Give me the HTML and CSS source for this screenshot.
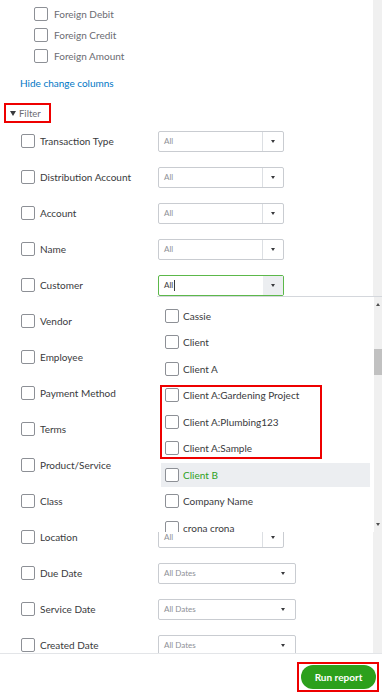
FILE: index.html
```html
<!DOCTYPE html>
<html lang="en">
<head>
    <meta charset="UTF-8">
    <meta name="viewport" content="width=device-width, initial-scale=1.0">
    <title>Report Filters</title>
    <link rel="stylesheet" href="styles.css">
</head>
<body>

<div class="scroller">
    <div class="content">
        <ul class="columns">
            <li><span class="box"></span>Foreign Balance</li>
            <li><span class="box"></span>Foreign Debit</li>
            <li><span class="box"></span>Foreign Credit</li>
            <li><span class="box"></span>Foreign Amount</li>
        </ul>

        <a class="change-link" href="#">Hide change columns</a>

        <div class="filter-head"><span class="caret"></span>Filter</div>

        <div class="filters">
            <div class="filter-row"><span class="box"></span><span class="label">Transaction Type</span>
                <div class="select"><span class="value">All</span><span class="arrow"></span></div></div>
            <div class="filter-row"><span class="box"></span><span class="label">Distribution Account</span>
                <div class="select"><span class="value">All</span><span class="arrow"></span></div></div>
            <div class="filter-row"><span class="box"></span><span class="label">Account</span>
                <div class="select"><span class="value">All</span><span class="arrow"></span></div></div>
            <div class="filter-row"><span class="box"></span><span class="label">Name</span>
                <div class="select"><span class="value">All</span><span class="arrow"></span></div></div>
            <div class="filter-row"><span class="box"></span><span class="label">Customer</span>
                <div class="select focused"><span class="value">All<span class="cursor"></span></span><span class="arrow"></span>
                    <div class="dropdown">
                        <ul class="options">
                            <li><span class="box"></span>Cassie</li>
                            <li><span class="box"></span>Client</li>
                            <li><span class="box"></span>Client A</li>
                            <li><span class="box"></span>Client A:Gardening Project</li>
                            <li><span class="box"></span>Client A:Plumbing123</li>
                            <li><span class="box"></span>Client A:Sample</li>
                            <li class="hover"><span class="box"></span>Client B</li>
                            <li><span class="box"></span>Company Name</li>
                            <li><span class="box"></span>crona crona</li>
                        </ul>
                        <div class="mark"></div>
                        <div class="dd-scroll">
                            <span class="up"></span>
                            <span class="thumb"></span>
                            <span class="down"></span>
                        </div>
                    </div>
                </div></div>
            <div class="filter-row"><span class="box"></span><span class="label">Vendor</span>
                <div class="select"><span class="value">All</span><span class="arrow"></span></div></div>
            <div class="filter-row"><span class="box"></span><span class="label">Employee</span>
                <div class="select"><span class="value">All</span><span class="arrow"></span></div></div>
            <div class="filter-row"><span class="box"></span><span class="label">Payment Method</span>
                <div class="select"><span class="value">All</span><span class="arrow"></span></div></div>
            <div class="filter-row"><span class="box"></span><span class="label">Terms</span>
                <div class="select"><span class="value">All</span><span class="arrow"></span></div></div>
            <div class="filter-row"><span class="box"></span><span class="label">Product/Service</span>
                <div class="select"><span class="value">All</span><span class="arrow"></span></div></div>
            <div class="filter-row"><span class="box"></span><span class="label">Class</span>
                <div class="select"><span class="value">All</span><span class="arrow"></span></div></div>
            <div class="filter-row"><span class="box"></span><span class="label">Location</span>
                <div class="select"><span class="value">All</span><span class="arrow"></span></div></div>
            <div class="filter-row"><span class="box"></span><span class="label">Due Date</span>
                <div class="select date"><span class="value">All Dates</span><span class="arrow"></span></div></div>
            <div class="filter-row"><span class="box"></span><span class="label">Service Date</span>
                <div class="select date"><span class="value">All Dates</span><span class="arrow"></span></div></div>
            <div class="filter-row"><span class="box"></span><span class="label">Created Date</span>
                <div class="select date"><span class="value">All Dates</span><span class="arrow"></span></div></div>
        </div>
    </div>
    <div class="track"></div>
</div>

<div class="footer">
    <div class="run-mark"><button type="button" class="run-button">Run report</button></div>
</div>

</body>
</html>
```

FILE: styles.css
```css
html, body {
    margin: 0;
    padding: 0;
    background-color: #fff;
    font-family: Lato, "Liberation Sans", sans-serif;
    color: #393a3d;
}

.scroller {
    height: 653px;
    display: flex;
    overflow: hidden;
}

.content {
    width: 373px;
    flex-shrink: 0;
}

.track {
    width: 9px;
    background-color: #f0f0f0;
}

.box {
    display: inline-block;
    box-sizing: border-box;
    width: 14px;
    height: 14px;
    border: 1px solid #8d9096;
    border-radius: 2px;
    background: #fff;
    flex-shrink: 0;
}

/* change columns list */
.columns {
    list-style: none;
    margin: -18px 0 0 0;
    padding: 0 0 0 34px;
}

.columns li {
    height: 21px;
    display: flex;
    align-items: center;
    gap: 6px;
    font-size: 10px;
    color: #6b6c72;
}

.change-link {
    display: block;
    margin: 10px 0 0 20px;
    line-height: 14px;
    font-size: 10px;
    color: #0077c5;
    text-decoration: none;
}

.filter-head {
    box-sizing: border-box;
    width: 47px;
    height: 20px;
    margin: 13px 0 0 4px;
    border: 2px solid #e00;
    display: flex;
    align-items: center;
    padding-left: 4px;
    font-size: 9.5px;
    color: #6b6c72;
}

.caret {
    width: 0;
    height: 0;
    border-left: 3.5px solid transparent;
    border-right: 3.5px solid transparent;
    border-top: 5px solid #393a3d;
    margin-right: 3px;
}

/* filter rows */
.filter-row {
    height: 36px;
    display: flex;
    align-items: center;
    padding-left: 21px;
}

.filter-row .label {
    width: 118px;
    margin-left: 5px;
    font-size: 10px;
}

.select {
    position: relative;
    box-sizing: border-box;
    width: 126px;
    height: 21px;
    border: 1px solid #c9ccd1;
    border-radius: 2px;
    display: flex;
    align-items: center;
    background: #fff;
}

.select .value {
    flex: 1;
    padding-left: 5px;
    font-size: 8px;
    color: #8d9096;
    display: flex;
    align-items: center;
}

.select .arrow {
    width: 20px;
    align-self: stretch;
    border-left: 1px solid #dcdfe3;
    display: flex;
    align-items: center;
    justify-content: center;
}

.select .arrow::after {
    content: "";
    border-left: 2.5px solid transparent;
    border-right: 2.5px solid transparent;
    border-top: 3px solid #393a3d;
}

.select.date {
    width: 138px;
}

.select.date .arrow {
    border-left: none;
    width: 24px;
}

.select.focused {
    border-color: #5cb84a;
}

.select.focused .value {
    color: #393a3d;
}

.select.focused .arrow {
    border-left: none;
    background: #eceef1;
}

.cursor {
    display: inline-block;
    width: 1px;
    height: 11px;
    margin-left: 1px;
    background: #393a3d;
}

/* customer dropdown */
.dropdown {
    position: absolute;
    top: calc(100% + 1px);
    left: -2px;
    z-index: 2;
    width: 226px;
    height: 235px;
    border-top: 1px solid #d4d7dc;
    background: #fff;
    overflow: hidden;
}

.options {
    list-style: none;
    margin: 0;
    padding: 7px 0 0 0;
}

.options li {
    height: 24px;
    margin: 0 13px 2.5px 4px;
    padding-left: 4px;
    display: flex;
    align-items: center;
    gap: 4px;
    font-size: 10px;
    color: #393a3d;
}

.options li.hover {
    background: #eceef1;
    color: #2ca01c;
}

.mark {
    position: absolute;
    top: 88px;
    left: 3px;
    box-sizing: border-box;
    width: 162px;
    height: 74px;
    border: 2px solid #e00;
}

.dd-scroll {
    position: absolute;
    top: 0;
    right: 0;
    bottom: 0;
    width: 9px;
    background: #f0f0f0;
}

.dd-scroll .up,
.dd-scroll .down {
    position: absolute;
    left: 2px;
    width: 0;
    height: 0;
    border-left: 2.5px solid transparent;
    border-right: 2.5px solid transparent;
}

.dd-scroll .up {
    top: 6px;
    border-bottom: 3px solid #505050;
}

.dd-scroll .down {
    bottom: 6px;
    border-top: 3px solid #505050;
}

.dd-scroll .thumb {
    position: absolute;
    top: 52px;
    left: 0;
    width: 9px;
    height: 26px;
    background: #c1c1c1;
}

/* footer */
.footer {
    height: 44px;
    border-top: 1px solid #e3e5e8;
    display: flex;
    justify-content: flex-end;
    align-items: flex-start;
    padding: 8px 3px 0 0;
    box-sizing: border-box;
}

.run-mark {
    border: 2px solid #e00;
    padding: 1px 1px 1px 2px;
}

.run-button {
    display: block;
    width: 75px;
    height: 24px;
    border: none;
    border-radius: 12px;
    background-color: #2ca01c;
    color: #fff;
    font-family: Lato, "Liberation Sans", sans-serif;
    font-size: 10px;
    font-weight: bold;
    cursor: pointer;
}
```
